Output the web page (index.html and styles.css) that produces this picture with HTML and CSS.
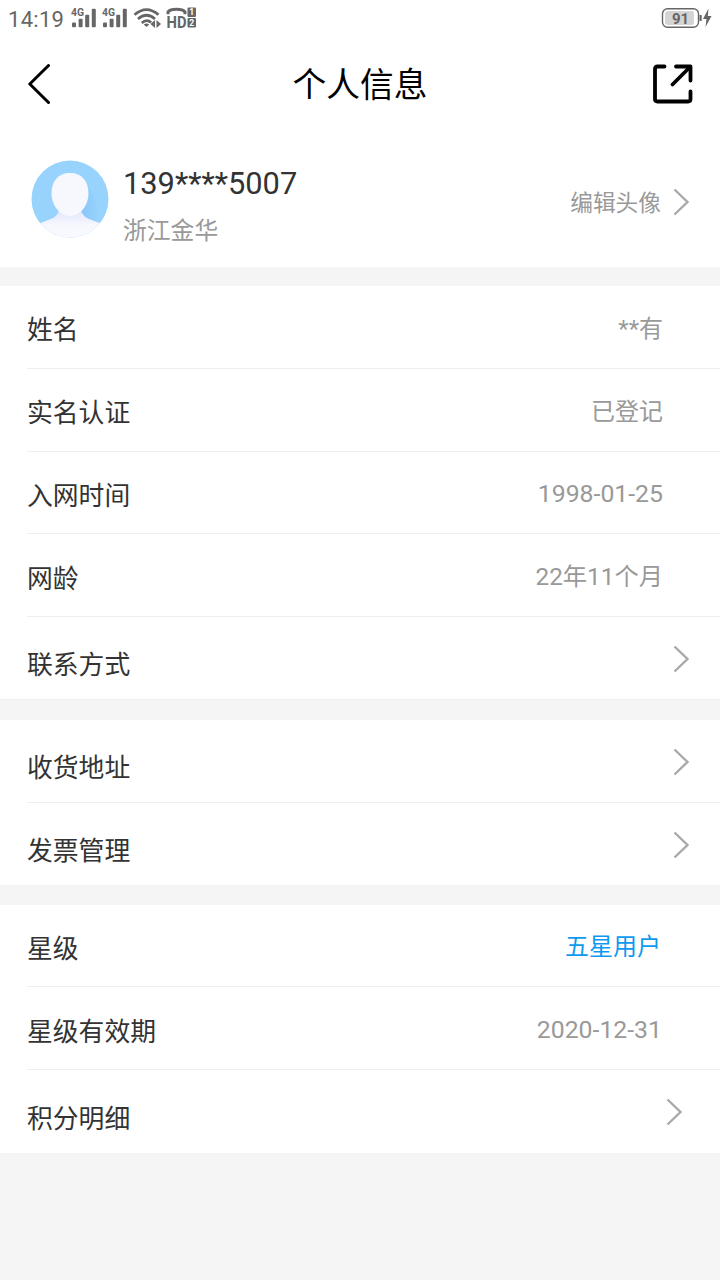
FILE: index.html
```html
<!DOCTYPE html>
<html lang="zh-CN">

<head>
    <meta charset="UTF-8">
    <meta name="viewport" content="width=device-width, initial-scale=1.0">
    <title>个人信息</title>
    <link rel="stylesheet" href="styles.css">
</head>

<body>
    <svg class="defs" width="0" height="0">
        <symbol id="arrow" viewBox="0 0 18 30">
            <path d="M2.5 2.5 L15.5 15 L2.5 27.5" fill="none" stroke="#a9a9a9" stroke-width="2.4" />
        </symbol>
        <symbol id="bars" viewBox="0 0 28 24">
            <rect x="1" y="16.5" width="4" height="4.8" rx="1" />
            <rect x="7.6" y="12.7" width="4" height="8.6" rx="1" />
            <rect x="14.2" y="8.7" width="4" height="12.6" rx="1" />
            <rect x="20.8" y="2.7" width="4" height="18.6" rx="1" />
        </symbol>
    </svg>

    <div class="status">
        <span class="time">14:19</span>
        <svg class="signal" width="28" height="24">
            <use href="#bars" />
            <text class="net" x="0" y="10" textLength="13" lengthAdjust="spacingAndGlyphs">4G</text>
        </svg>
        <svg class="signal" width="28" height="24">
            <use href="#bars" />
            <text class="net" x="0" y="10" textLength="13" lengthAdjust="spacingAndGlyphs">4G</text>
        </svg>
        <svg class="wifi" width="30" height="24" viewBox="0 0 30 24">
            <g fill="none" stroke="#666" stroke-width="2.7">
                <path d="M1.5 8.8 Q13.5 -1.5 25.5 8.8" />
                <path d="M5 13 Q13.5 5.5 22 13" />
                <path d="M8.8 17 Q13.5 12.5 18.2 16.5" />
            </g>
            <path d="M10.8 18.5 Q13.5 16.5 16.2 18.5 L13.5 21 Z" />
            <path d="M17.5 18 L22 14 V22 Z M23.5 14 L28 18 L23.5 22 Z" />
        </svg>
        <svg class="hd" width="32" height="24" viewBox="0 0 32 24">
            <path d="M3 8.3 V6 Q5 3.3 11.5 3.3 Q18 3.3 20 6 V8.3" fill="none" stroke="#666" stroke-width="3" />
            <text class="hd-text" x="1.5" y="21.5" textLength="20" lengthAdjust="spacingAndGlyphs">HD</text>
            <rect x="22.5" y="1.5" width="8.5" height="9.5" rx="1" />
            <rect x="22.5" y="12" width="8.5" height="9.5" rx="1" />
            <text class="sim" x="26.7" y="9.3">1</text>
            <text class="sim" x="26.7" y="19.8">2</text>
        </svg>
        <svg class="battery" width="52" height="24" viewBox="0 0 52 24">
            <rect x="1.5" y="2.7" width="36" height="18.6" rx="5" fill="#fff" stroke="#666" stroke-width="1.4" />
            <rect x="4" y="5" width="29" height="14" rx="3" fill="#d4d4d4" />
            <text class="level" x="19.5" y="17.5">91</text>
            <rect x="38.5" y="9" width="2.2" height="6" />
            <path d="M47.5 2.5 L42 13 H45.5 L44.5 21 L50.5 10 H46.8 Z" />
        </svg>
    </div>

    <div class="header">
        <svg class="back" width="24" height="42" viewBox="0 0 24 42">
            <path d="M20.5 2.5 L1.8 21 L20.5 39.5" fill="none" stroke="#000" stroke-width="3" stroke-linecap="round" stroke-linejoin="round" />
        </svg>
        <h1 class="title">个人信息</h1>
        <svg class="share" width="42" height="42" viewBox="0 0 42 42">
            <g fill="none" stroke="#000" stroke-width="3.8" stroke-linecap="round" stroke-linejoin="round">
                <path d="M12.5 3.5 H5.5 Q3 3.5 3 6 V36 Q3 38.5 5.5 38.5 H36 Q38.5 38.5 38.5 36 V28.5" />
                <path d="M24 3.5 H38.5 V17.5" />
                <path d="M37.5 4.5 L20.5 21.5" />
            </g>
        </svg>
    </div>

    <div class="user">
        <svg class="avatar" width="78" height="78" viewBox="0 0 78 78">
            <defs>
                <clipPath id="round"><circle cx="39" cy="39" r="38.5" /></clipPath>
                <linearGradient id="neck" x1="0" y1="0" x2="0" y2="1">
                    <stop offset="0" stop-color="#d9e0fa" />
                    <stop offset="0.35" stop-color="#ebeefd" />
                    <stop offset="0.6" stop-color="#f7f8fe" />
                    <stop offset="1" stop-color="#f9f9fe" />
                </linearGradient>
                <linearGradient id="shade" x1="0" y1="0" x2="1" y2="0">
                    <stop offset="0.3" stop-color="#8ac8fa" />
                    <stop offset="1" stop-color="#97d3fd" />
                </linearGradient>
            </defs>
            <g clip-path="url(#round)">
                <rect width="78" height="78" fill="#97d3fd" />
                <path d="M56 26 Q66 38 68 64 H46 V48 Z" fill="url(#shade)" />
                <path d="M29 46 H49 Q50 56 58 59 L70 63.5 V78 H8 V63.5 L20 59 Q28 56 29 46 Z" fill="url(#neck)" />
                <path d="M39 13 C51 13 57.5 21 57.5 34 C57 46 49 56 39 56 C29 56 21 46 20.5 34 C20.5 21 27 13 39 13 Z" fill="#f6f8fe" />
            </g>
        </svg>
        <div class="info">
            <div class="phone">139****5007</div>
            <div class="city">浙江金华</div>
        </div>
        <span class="edit">编辑头像</span>
        <svg class="arrow" width="18" height="30"><use href="#arrow" /></svg>
    </div>

    <div class="list basic">
        <div class="row"><span class="label">姓名</span><span class="value">**有</span></div>
        <div class="row"><span class="label">实名认证</span><span class="value">已登记</span></div>
        <div class="row"><span class="label">入网时间</span><span class="value date">1998-01-25</span></div>
        <div class="row"><span class="label">网龄</span><span class="value age">22年11个月</span></div>
        <div class="row link"><span class="label">联系方式</span><svg class="arrow" width="18" height="30"><use href="#arrow" /></svg></div>
    </div>

    <div class="list">
        <div class="row link"><span class="label">收货地址</span><svg class="arrow" width="18" height="30"><use href="#arrow" /></svg></div>
        <div class="row link"><span class="label">发票管理</span><svg class="arrow" width="18" height="30"><use href="#arrow" /></svg></div>
    </div>

    <div class="list star">
        <div class="row"><span class="label">星级</span><span class="value blue">五星用户</span></div>
        <div class="row"><span class="label">星级有效期</span><span class="value date">2020-12-31</span></div>
        <div class="row link"><span class="label">积分明细</span><svg class="arrow" width="18" height="30"><use href="#arrow" /></svg></div>
    </div>
</body>

</html>
```

FILE: styles.css
```css
* {
    box-sizing: border-box;
}

body {
    margin: 0;
    min-height: 1280px;
    background-color: #f5f5f5;
    color: #333;
    font-family: Roboto, "Noto Sans CJK SC", sans-serif;
}

svg {
    display: block;
    flex-shrink: 0;
}

.defs {
    position: absolute;
}

.status {
    height: 38px;
    padding: 0 7px 2px 8px;
    display: flex;
    align-items: center;
    background-color: white;
    color: #666;
    fill: #666;
}

.time {
    width: 63px;
    font-size: 22px;
    line-height: 26px;
    padding-top: 3px;
    letter-spacing: 0.3px;
}

.signal {
    margin-right: 3px;
}

.net {
    font-size: 10px;
    font-weight: bold;
}

.wifi {
    margin-right: 2px;
}

.hd-text {
    font-size: 16px;
    font-weight: bold;
}

.sim {
    font-size: 8.5px;
    font-weight: bold;
    fill: white;
    text-anchor: middle;
}

.battery {
    margin-left: auto;
}

.level {
    font-size: 15px;
    font-weight: bold;
    text-anchor: middle;
}

.header {
    height: 92px;
    padding: 0 26px 0 28px;
    display: grid;
    grid-template-columns: 42px 1fr 42px;
    align-items: center;
    background-color: white;
}

.title {
    margin: 0;
    padding: 4px 2px 0 0;
    font-size: 33.7px;
    line-height: 40px;
    font-weight: normal;
    color: #000;
    text-align: center;
}

.user {
    height: 137px;
    padding: 0 30px 0 31px;
    display: flex;
    align-items: center;
    background-color: white;
}

.info {
    margin: 15px auto 0 14px;
}

.phone {
    font-size: 30.8px;
    line-height: 40px;
}

.city {
    margin-top: 10px;
    font-size: 23.8px;
    line-height: 34px;
    color: #999;
}

.edit {
    margin: 10px 11px 0 0;
    font-size: 22.7px;
    line-height: 34px;
    color: #999;
}

.user .arrow {
    margin-top: 7px;
}

.list {
    margin-top: 20px;
    padding-left: 27px;
    background-color: white;
}

.basic {
    margin-top: 19px;
    border-bottom: 1px solid #eee;
}

.row {
    height: 82.75px;
    padding-right: 57px;
    display: flex;
    align-items: center;
    justify-content: space-between;
    border-bottom: 1px solid #eee;
}

.row:last-child {
    border-bottom: none;
}

.basic .row:last-child {
    height: 81.75px;
}

.link {
    padding-right: 30px;
}

.label {
    padding-top: 7px;
    font-size: 25.8px;
    line-height: 36px;
}

.link .label {
    padding-top: 15px;
}

.value {
    padding-top: 4px;
    font-size: 24px;
    line-height: 34px;
    color: #999;
}

.date {
    font-size: 24.8px;
}

.age {
    font-size: 24.3px;
}

.star .value {
    margin-right: 1px;
}

.link .arrow {
    margin-top: 2px;
}

.star {
    margin-top: 19.25px;
}

.star .blue {
    margin-right: 2px;
    color: #0f9af0;
}

.star .arrow {
    margin-right: 7px;
}
```
